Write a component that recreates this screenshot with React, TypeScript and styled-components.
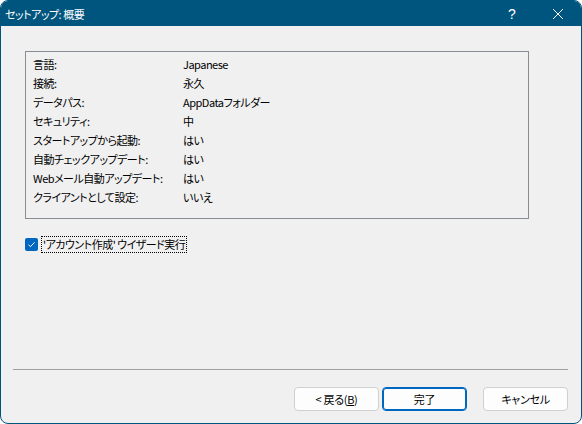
import React from 'react';
import styled, { createGlobalStyle } from 'styled-components';

const GlobalStyle = createGlobalStyle`
  html, body {
    margin: 0;
    padding: 0;
    background: #ffffff;
  }
  body {
    font-family: "Noto Sans CJK JP", "Noto Sans", sans-serif;
    font-size: 11px;
    color: #000;
  }
`;

const Window = styled.div`
  width: 582px;
  height: 424px;
  box-sizing: border-box;
  border: 1px solid #00557f;
  border-radius: 8px;
  overflow: hidden;
  background: #f0f0f0;
  display: flex;
  flex-direction: column;
`;

const TitleBar = styled.div`
  height: 25px;
  background: #00557f;
  color: #fff;
  display: flex;
  align-items: center;
  padding-left: 4px;
  font-size: 11px;
  font-feature-settings: "palt";
`;

const TitleText = styled.div`
  flex: 1;
  letter-spacing: -0.5px;
`;

const TitleButton = styled.div<{ $w: number }>`
  width: ${p => p.$w}px;
  height: 25px;
  display: flex;
  align-items: center;
  justify-content: center;
  font-size: 14px;
  font-family: "Liberation Sans", sans-serif;
`;

const Body = styled.div`
  flex: 1;
  display: flex;
  flex-direction: column;
  padding: 25px 0 0 24px;
`;

const SummaryBox = styled.div`
  width: 504px;
  height: 168px;
  box-sizing: border-box;
  border: 1px solid #888c94;
  padding: 3px 0 0 7px;
  display: grid;
  grid-template-columns: 150px 1fr;
  grid-auto-rows: 19px;
  align-content: start;
  font-feature-settings: "palt";
  letter-spacing: -0.5px;
`;

const Cell = styled.div`
  line-height: 19px;
  white-space: nowrap;
`;

const CheckRow = styled.label`
  margin-top: 17px;
  display: flex;
  align-items: center;
  gap: 3px;
  font-feature-settings: "palt";
  letter-spacing: -0.5px;
`;

const CheckBox = styled.span`
  width: 13px;
  height: 13px;
  border-radius: 2px;
  background: #0067c0;
  display: flex;
  align-items: center;
  justify-content: center;
`;

const CheckLabel = styled.span`
  border: 1px dotted #000;
  padding: 0 1px;
  line-height: 15px;
`;

const Spacer = styled.div`
  flex: 1;
`;

const Footer = styled.div`
  padding: 0 13px 12px 12px;
  display: flex;
  flex-direction: column;
`;

const Separator = styled.div`
  height: 1px;
  background: #a0a0a0;
`;

const ButtonRow = styled.div`
  margin-top: 17px;
  display: flex;
  justify-content: flex-end;
`;

const Button = styled.button<{ $primary?: boolean; $gap?: number }>`
  width: 85px;
  height: 24px;
  margin-left: ${p => p.$gap ?? 0}px;
  box-sizing: border-box;
  background: #fdfdfd;
  border: 1px solid ${p => (p.$primary ? '#0067c0' : '#d0d0d0')};
  border-radius: 4px;
  font-family: "Noto Sans CJK JP", "Noto Sans", sans-serif;
  font-size: 11px;
  letter-spacing: -0.3px;
  font-feature-settings: "palt";
  color: #000;
  padding: 0;
  box-shadow: ${p => (p.$primary ? 'inset 0 0 0 1px #0067c0' : 'none')};
`;

const rows: [string, string][] = [
  ['言語:', 'Japanese'],
  ['接続:', '永久'],
  ['データパス:', 'AppDataフォルダー'],
  ['セキュリティ:', '中'],
  ['スタートアップから起動:', 'はい'],
  ['自動チェックアップデート:', 'はい'],
  ['Webメール自動アップデート:', 'はい'],
  ['クライアントとして設定:', 'いいえ'],
];

const App = () => {
  return (
    <>
      <GlobalStyle />
      <Window>
        <TitleBar>
          <TitleText>セットアップ: 概要</TitleText>
          <TitleButton $w={46}>?</TitleButton>
          <TitleButton $w={46}>
            <svg width="12" height="12" viewBox="0 0 12 12">
              <path d="M1 1L11 11M11 1L1 11" stroke="#fff" strokeWidth="1" fill="none" />
            </svg>
          </TitleButton>
        </TitleBar>
        <Body>
          <SummaryBox>
            {rows.map(([k, v]) => (
              <React.Fragment key={k}>
                <Cell>{k}</Cell>
                <Cell>{v}</Cell>
              </React.Fragment>
            ))}
          </SummaryBox>
          <CheckRow>
            <CheckBox>
              <svg width="9" height="9" viewBox="0 0 9 9">
                <path d="M1.5 4.8L3.5 6.6L7.5 2.4" stroke="#fff" strokeWidth="1" fill="none" />
              </svg>
            </CheckBox>
            <CheckLabel>'アカウント作成' ウイザード実行</CheckLabel>
          </CheckRow>
          <Spacer />
        </Body>
        <Footer>
          <Separator />
          <ButtonRow>
            <Button>&lt; 戻る(<u>B</u>)</Button>
            <Button $primary $gap={3}>完了</Button>
            <Button $gap={16}>キャンセル</Button>
          </ButtonRow>
        </Footer>
      </Window>
    </>
  );
};

export default App;
